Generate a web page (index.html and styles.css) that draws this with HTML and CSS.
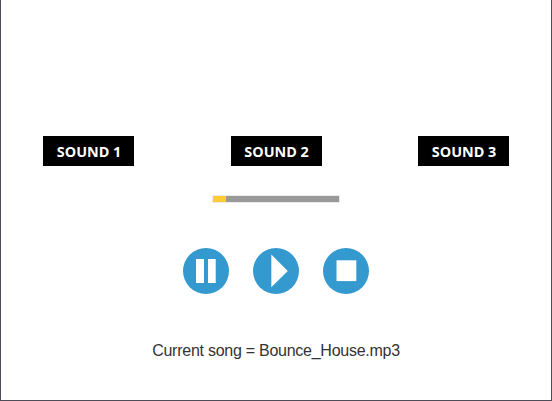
FILE: index.html
```html
<!DOCTYPE html>
<html lang="en">
<head>
<meta charset="utf-8">
<title>Sound player</title>
<link rel="stylesheet" href="styles.css">
</head>
<body>
<main class="player">
  <nav class="sounds">
    <button class="sound"><svg width="91" height="30"><text x="13.8" y="21" textLength="64.5" lengthAdjust="spacingAndGlyphs">SOUND 1</text></svg></button>
    <button class="sound"><svg width="91" height="30"><text x="13.3" y="21" textLength="64.5" lengthAdjust="spacingAndGlyphs">SOUND 2</text></svg></button>
    <button class="sound"><svg width="91" height="30"><text x="13.8" y="21" textLength="64.5" lengthAdjust="spacingAndGlyphs">SOUND 3</text></svg></button>
  </nav>
  <div class="track"><div class="progress"></div></div>
  <div class="controls">
    <button class="control" aria-label="Pause"><svg viewBox="0 0 46 46"><circle cx="23" cy="23" r="23"/><path d="M13 11h8v24h-8zM25 11h7.7v24H25z"/></svg></button>
    <button class="control" aria-label="Play"><svg viewBox="0 0 46 46"><circle cx="23" cy="23" r="23"/><path d="M18.3 6.6L34.8 23 18.3 39.3z"/></svg></button>
    <button class="control" aria-label="Stop"><svg viewBox="0 0 46 46"><circle cx="23" cy="23" r="23"/><path d="M13.5 12.3H33.3v20.8H13.5z"/></svg></button>
  </div>
  <p class="song">Current song = Bounce_House.mp3</p>
</main>
</body>
</html>
```
FILE: styles.css
```css
* { box-sizing: border-box; }
body { margin: 0; background: #fff; }
.player {
  height: 401px;
  border: 1px solid #4d4c57;
  border-top: 0;
  padding-top: 136px;
  display: flex;
  flex-direction: column;
  align-items: center;
}
button { padding: 0; border: 0; background: none; display: block; }
svg { display: block; }
.sounds { display: flex; justify-content: space-between; width: 466px; }
.sound { width: 91px; height: 30px; background: #000; }
.sound text { font: bold 15px "Open Sans", sans-serif; fill: #fff; }
.track { width: 126px; height: 6px; margin-top: 30px; background: #999; box-shadow: 0 0 0 1px #ebebe8; }
.progress { width: 13px; height: 6px; background: #fc3; }
.controls { display: flex; justify-content: space-between; width: 186px; margin-top: 46px; }
.control svg { width: 46px; height: 46px; }
.control circle { fill: #3399cf; }
.control path { fill: #fff; }
.song { margin: 48px 0 0; font: 16px/18px "Liberation Sans", Arial, sans-serif; letter-spacing: -0.26px; color: #333; }
```
